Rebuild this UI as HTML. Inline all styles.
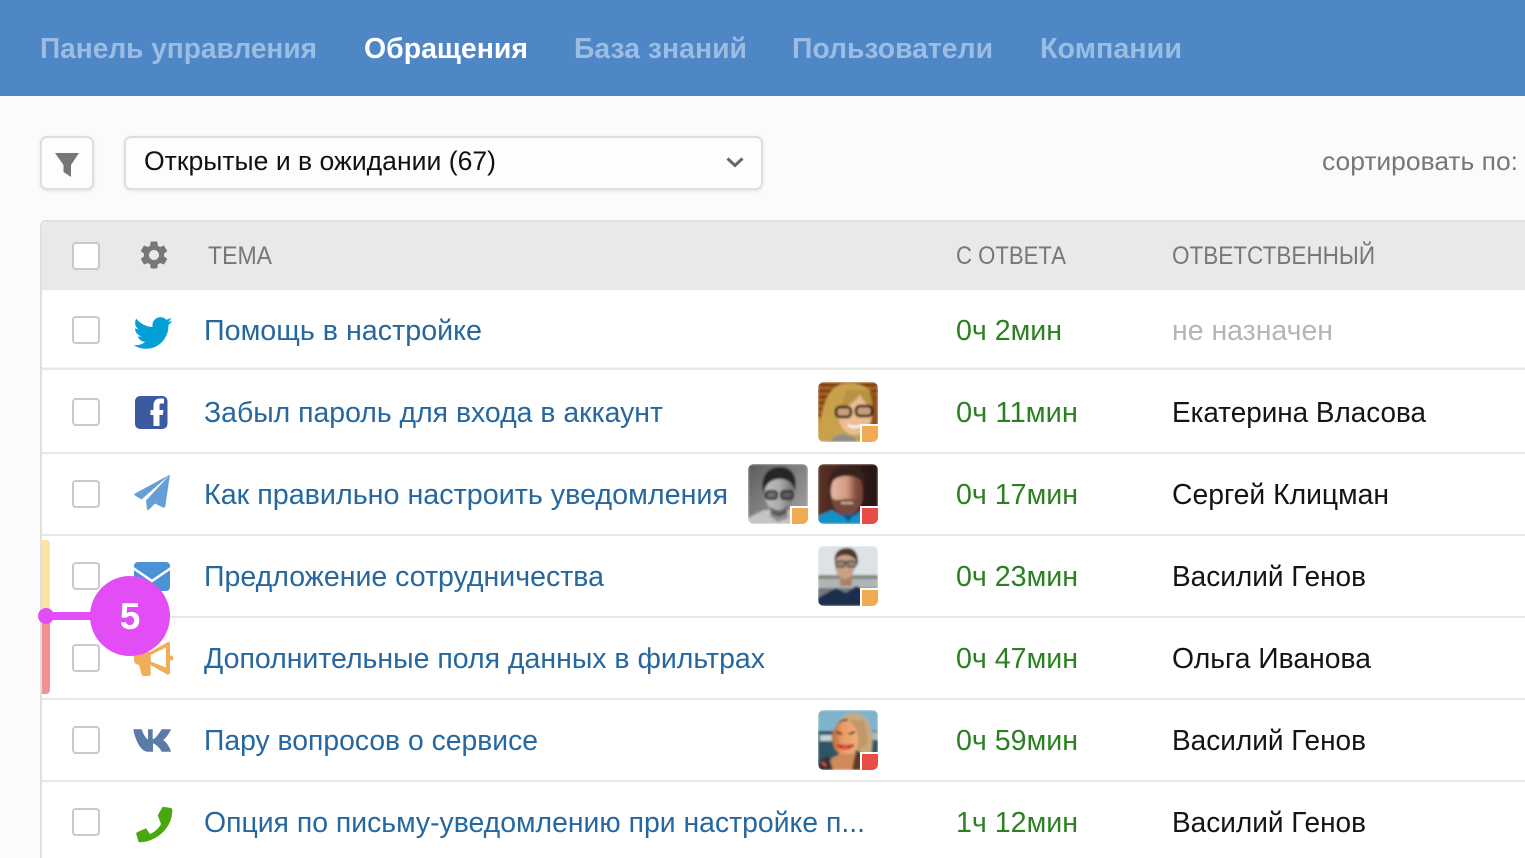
<!DOCTYPE html>
<html lang="ru"><head><meta charset="utf-8"><title>Обращения</title>
<style>
html,body{margin:0;padding:0;width:1525px;height:858px;overflow:hidden;background:#fbfbfb}
svg{display:block}
text{font-family:"Liberation Sans","DejaVu Sans",sans-serif}
.nav{font-size:29px;font-weight:700;fill:#9bbde3}
.hd{font-size:25px;fill:#777}
.l{font-size:29px;fill:#26679f}
.t{font-size:29px;fill:#2b8021}
.n{font-size:29px;fill:#141414}
.cb{fill:#fff;stroke:#c9c9c9;stroke-width:2}
.sep{fill:#e7e7e7}
</style></head><body>
<svg width="1525" height="858" viewBox="0 0 1525 858" xmlns="http://www.w3.org/2000/svg">
<defs>
<filter id="b" x="-10%" y="-10%" width="120%" height="120%"><feGaussianBlur stdDeviation="1.1"/></filter>
<filter id="s" x="-10%" y="-20%" width="120%" height="140%"><feDropShadow dx="0" dy="1" stdDeviation="1.5" flood-color="#000" flood-opacity=".1"/></filter>
<clipPath id="av"><rect width="60" height="60" rx="6"/></clipPath>
<linearGradient id="g2" x1="0" y1="0" x2="1" y2="1"><stop offset="0" stop-color="#5c5c5c"/><stop offset="1" stop-color="#a8a8a8"/></linearGradient>
<linearGradient id="f2" x1="0" x2="1"><stop offset="0" stop-color="#c0c0c0"/><stop offset=".55" stop-color="#aaa"/><stop offset="1" stop-color="#6e6e6e"/></linearGradient>
<linearGradient id="f3" x1="0" x2="1"><stop offset="0" stop-color="#e6b8a4"/><stop offset=".5" stop-color="#d09a80"/><stop offset=".75" stop-color="#8a5442"/><stop offset="1" stop-color="#6a3c30"/></linearGradient>
<linearGradient id="b3" x1="0" x2="1"><stop offset="0" stop-color="#5a3226"/><stop offset="1" stop-color="#241110"/></linearGradient>
<linearGradient id="f5" x1="0" x2="1"><stop offset="0" stop-color="#b86a3c"/><stop offset=".4" stop-color="#e89c62"/><stop offset="1" stop-color="#eeb07c"/></linearGradient>
</defs>
<rect width="1525" height="858" fill="#fbfbfb"/>
<rect width="1525" height="96" fill="#4f86c6"/>
<text class="nav" x="40" y="58" textLength="277" lengthAdjust="spacingAndGlyphs">Панель управления</text>
<text class="nav" x="364" y="58" textLength="164" lengthAdjust="spacingAndGlyphs" style="fill:#fff">Обращения</text>
<text class="nav" x="574" y="58" textLength="173" lengthAdjust="spacingAndGlyphs">База знаний</text>
<text class="nav" x="792" y="58" textLength="201" lengthAdjust="spacingAndGlyphs">Пользователи</text>
<text class="nav" x="1040" y="58" textLength="142" lengthAdjust="spacingAndGlyphs">Компании</text>

<rect x="41" y="137" width="52" height="52" rx="6" fill="#fdfdfd" stroke="#dedede" stroke-width="2" filter="url(#s)"/>
<path d="M55 153H79L71 165V177L63.500 172V165Z" fill="#777"/>
<rect x="125" y="137" width="637" height="52" rx="6" fill="#fdfdfd" stroke="#dedede" stroke-width="2" filter="url(#s)"/>
<text x="144" y="170" font-size="27" fill="#111" textLength="352" lengthAdjust="spacingAndGlyphs">Открытые и в ожидании (67)</text>
<path d="M727.500 158.500L735 165.500L742.500 158.500" fill="none" stroke="#666" stroke-width="3"/>
<text x="1322" y="170" font-size="26" fill="#777" textLength="196" lengthAdjust="spacingAndGlyphs">сортировать по:</text>

<path d="M1525 220H46a6 6 0 0 0-6 6V858H1525Z" fill="#fff"/>
<path d="M1525 222H48a6 6 0 0 0-6 6V290H1525Z" fill="#e8e9eb"/>
<path d="M1525 221H46a5 5 0 0 0-5 5V858" fill="none" stroke="#dfdfdf" stroke-width="2"/>

<rect class="sep" x="42" y="367.500" width="1483" height="2.500"/>
<rect class="sep" x="42" y="452" width="1483" height="2"/>
<rect class="sep" x="42" y="534" width="1483" height="2"/>
<rect class="sep" x="42" y="616" width="1483" height="2"/>
<rect class="sep" x="42" y="698" width="1483" height="2"/>
<rect class="sep" x="42" y="780" width="1483" height="2"/>

<rect class="cb" x="73" y="243" width="26" height="26" rx="3"/>
<rect class="cb" x="73" y="317" width="26" height="26" rx="3"/>
<rect class="cb" x="73" y="399" width="26" height="26" rx="3"/>
<rect class="cb" x="73" y="481" width="26" height="26" rx="3"/>
<rect class="cb" x="73" y="563" width="26" height="26" rx="3"/>
<rect class="cb" x="73" y="645" width="26" height="26" rx="3"/>
<rect class="cb" x="73" y="727" width="26" height="26" rx="3"/>
<rect class="cb" x="73" y="809" width="26" height="26" rx="3"/>

<g transform="translate(137.200,238.200) scale(1.4)"><path fill="#777" fill-rule="evenodd" d="M19.14 12.94c.04-.3.06-.61.06-.94 0-.32-.02-.64-.07-.94l2.03-1.58a.49.49 0 00.12-.61l-1.92-3.32a.488.488 0 00-.59-.22l-2.39.96c-.5-.38-1.03-.7-1.62-.94l-.36-2.54a.484.484 0 00-.48-.41h-3.84c-.24 0-.43.17-.47.41l-.36 2.54c-.59.24-1.13.57-1.62.94l-2.39-.96c-.22-.08-.47 0-.59.22L2.74 8.87c-.12.21-.08.47.12.61l2.03 1.58c-.05.3-.09.63-.09.94s.02.64.07.94l-2.03 1.58a.49.49 0 00-.12.61l1.92 3.32c.12.22.37.29.59.22l2.39-.96c.5.38 1.03.7 1.62.94l.36 2.54c.05.24.24.41.48.41h3.84c.24 0 .44-.17.47-.41l.36-2.54c.59-.24 1.13-.56 1.62-.94l2.39.96c.22.08.47 0 .59-.22l1.92-3.32c.12-.22.07-.47-.12-.61l-2.01-1.58zM12 15.6c-1.98 0-3.6-1.62-3.6-3.6s1.62-3.6 3.6-3.6 3.6 1.62 3.6 3.6-1.62 3.6-3.6 3.6z"/></g>

<text class="hd" x="208" y="264" textLength="64" lengthAdjust="spacingAndGlyphs">ТЕМА</text>
<text class="hd" x="956" y="264" textLength="110" lengthAdjust="spacingAndGlyphs">С ОТВЕТА</text>
<text class="hd" x="1172" y="264" textLength="203" lengthAdjust="spacingAndGlyphs">ОТВЕТСТВЕННЫЙ</text>

<text class="l" x="204" y="340" textLength="278" lengthAdjust="spacingAndGlyphs">Помощь в настройке</text>
<text class="l" x="204" y="422" textLength="459" lengthAdjust="spacingAndGlyphs">Забыл пароль для входа в аккаунт</text>
<text class="l" x="204" y="504" textLength="524" lengthAdjust="spacingAndGlyphs">Как правильно настроить уведомления</text>
<text class="l" x="204" y="586" textLength="400" lengthAdjust="spacingAndGlyphs">Предложение сотрудничества</text>
<text class="l" x="204" y="668" textLength="561" lengthAdjust="spacingAndGlyphs">Дополнительные поля данных в фильтрах</text>
<text class="l" x="204" y="750" textLength="334" lengthAdjust="spacingAndGlyphs">Пару вопросов о сервисе</text>
<text class="l" x="204" y="832" textLength="661" lengthAdjust="spacingAndGlyphs">Опция по письму-уведомлению при настройке п...</text>

<text class="t" x="956" y="340" textLength="106" lengthAdjust="spacingAndGlyphs">0ч 2мин</text>
<text class="t" x="956" y="422" textLength="122" lengthAdjust="spacingAndGlyphs">0ч 11мин</text>
<text class="t" x="956" y="504" textLength="122" lengthAdjust="spacingAndGlyphs">0ч 17мин</text>
<text class="t" x="956" y="586" textLength="122" lengthAdjust="spacingAndGlyphs">0ч 23мин</text>
<text class="t" x="956" y="668" textLength="122" lengthAdjust="spacingAndGlyphs">0ч 47мин</text>
<text class="t" x="956" y="750" textLength="122" lengthAdjust="spacingAndGlyphs">0ч 59мин</text>
<text class="t" x="956" y="832" textLength="122" lengthAdjust="spacingAndGlyphs">1ч 12мин</text>

<text class="n" x="1172" y="340" textLength="161" lengthAdjust="spacingAndGlyphs" style="fill:#b5b5b5">не назначен</text>
<text class="n" x="1172" y="422" textLength="254" lengthAdjust="spacingAndGlyphs">Екатерина Власова</text>
<text class="n" x="1172" y="504" textLength="217" lengthAdjust="spacingAndGlyphs">Сергей Клицман</text>
<text class="n" x="1172" y="586" textLength="194" lengthAdjust="spacingAndGlyphs">Василий Генов</text>
<text class="n" x="1172" y="668" textLength="199" lengthAdjust="spacingAndGlyphs">Ольга Иванова</text>
<text class="n" x="1172" y="750" textLength="194" lengthAdjust="spacingAndGlyphs">Василий Генов</text>
<text class="n" x="1172" y="832" textLength="194" lengthAdjust="spacingAndGlyphs">Василий Генов</text>

<!-- twitter -->
<g transform="translate(133.500,313.500) scale(1.62)"><path fill="#049fd6" d="M23.95 4.57a10 10 0 01-2.82.78 4.96 4.96 0 002.16-2.72c-.95.55-2 .96-3.12 1.19a4.92 4.92 0 00-8.38 4.48C7.69 8.1 4.07 6.13 1.64 3.16a4.82 4.82 0 00-.66 2.47c0 1.71.87 3.21 2.19 4.1a4.9 4.9 0 01-2.23-.61v.06c0 2.39 1.7 4.38 3.95 4.83-.41.11-.85.17-1.3.17-.31 0-.61-.03-.92-.08.63 1.96 2.45 3.39 4.6 3.43A9.87 9.87 0 010 19.54a14 14 0 007.56 2.21c9.05 0 14-7.5 14-13.98 0-.21 0-.42-.02-.63a9.94 9.94 0 002.46-2.55l-.05-.02z"/></g>
<!-- facebook -->
<rect x="135" y="396" width="32.500" height="33" rx="5" fill="#3b5a9f"/>
<path d="M153.500 426V415H150.500V410H153.500V405.500C153.500 400.500 156.500 398.500 160 398.500H164V403.500H161.500C160 403.500 159.500 404.200 159.500 405.500V410H163.500L162.800 415H159.500V426Z" fill="#fff"/>
<!-- plane -->
<path d="M170 474.500L135 493.500Q133.500 494.500 135 495.500L141.500 499.500ZM170 474.500L146 500.500L147 509Q147.500 511 149 509.500L155 503.500L163 507.500Q165 508 165.300 506Z" fill="#659fd6"/>
<!-- mail -->
<path d="M138 562H166a4 4 0 0 1 4 4V587a4 4 0 0 1-4 4H138a4 4 0 0 1-4-4V566a4 4 0 0 1 4-4Z" fill="#4b93d6"/>
<path d="M133 568L152 581L171 568" fill="none" stroke="#fff" stroke-width="2.500"/>
<!-- megaphone -->
<path fill="#f0ae5a" fill-rule="evenodd" d="M170 642.500V673.500L168 675L150.500 665L150.700 674Q150.700 676 148.700 676H144Q142 676 141.500 674L139 665Q134 664 134 660V656Q134 652 138 652H150L168 642ZM166 647.500L150.700 655V661.500L166 667.500Z"/>
<circle cx="171" cy="658" r="2.500" fill="#f0ae5a"/>
<!-- vk -->
<path fill="#5a7ba5" d="M133.300 729.300H141.700C143 733.500 145.300 738 148 739.500V729.300H152.700V739.500C155.800 738.500 159 733.500 161.700 729.300H171C169.500 733 166.500 737.500 163.300 740C166.500 742.500 169.500 746.500 171 751.700H161.700C159.500 747.500 156 744.500 153 743.300V751.700H146.700C140 750.500 135 739 133.300 729.300Z"/>
<!-- phone -->
<path fill="#4aa80f" d="M162.700 806.700L171 808Q172.300 808.500 172.300 810C172.800 828 156 842 140 842.300Q138.500 842.300 138.300 841L136.300 834Q136 832.800 137 832.300L146 828.300L150 834C155 832 159 828 161 824L158 816Q157.700 815 158.200 814.500Z"/>

<!-- avatar 1 -->
<g transform="translate(818,382)"><g clip-path="url(#av)"><g filter="url(#b)">
<rect width="60" height="60" fill="#a85f20"/>
<path d="M0 3H60M0 9H60M0 15H60M0 21H60M0 27H60M0 33H60" stroke="#5e2f10" stroke-width="2"/>
<rect y="36" width="60" height="24" fill="#c5852f"/>
<path d="M0 60C2 36 6 6 24 2C40 0 52 4 56 16L52 60Z" fill="#c8a24c"/>
<path d="M52 10L60 14V60H50Z" fill="#90501c"/>
<ellipse cx="37" cy="32" rx="17" ry="21" fill="#ecbc94"/>
<path d="M17 28C24 22 27 14 28 8L50 8C54 14 54 22 54 26C48 22 44 18 42 12C38 20 28 24 17 34Z" fill="#b8923f"/>
<path d="M12 60C14 54 22 52 26 52L38 56V60Z" fill="#8e8e86"/>
<rect x="18" y="25" width="15" height="10" rx="4" fill="#c99c7a" stroke="#17120f" stroke-width="2.600"/>
<rect x="38" y="24" width="16" height="10" rx="4" fill="#c99c7a" stroke="#17120f" stroke-width="2.600"/>
<path d="M30 43Q37 47 43 43" stroke="#fff" stroke-width="2.200" fill="none"/>
</g>
<rect x="42" y="42" width="18" height="18" fill="#fff"/><rect x="44" y="44" width="16" height="16" fill="#f2ab52"/></g></g>

<!-- avatar 2 -->
<g transform="translate(748,464)"><g clip-path="url(#av)"><g filter="url(#b)">
<rect width="60" height="60" fill="url(#g2)"/>
<path d="M0 60V54L16 46H44L56 60Z" fill="#c4c4c4"/>
<path d="M22 44H40V54L30 58L22 52Z" fill="#8e8e8e"/>
<ellipse cx="31" cy="29" rx="14" ry="20" fill="url(#f2)"/>
<path d="M15 28C12 10 22 3 32 3C44 3 50 12 47 28C45 20 42 16 34 15C26 14 18 18 16 28Z" fill="#262626"/>
<path d="M22 42C26 48 36 48 40 41L38 50L31 53L24 50Z" fill="#5c5c5c"/>
<rect x="18" y="27" width="11" height="8" rx="3" fill="#6d6d6d" stroke="#1e1e1e" stroke-width="2"/>
<rect x="33" y="27" width="12" height="8" rx="3" fill="#5c5c5c" stroke="#1e1e1e" stroke-width="2"/>
</g>
<rect x="42" y="42" width="18" height="18" fill="#fff"/><rect x="44" y="44" width="16" height="16" fill="#f2ab52"/></g></g>

<!-- avatar 3 -->
<g transform="translate(818,464)"><g clip-path="url(#av)"><g filter="url(#b)">
<rect width="60" height="60" fill="url(#b3)"/>
<ellipse cx="29" cy="27" rx="16" ry="21" fill="url(#f3)"/>
<path d="M11 24C8 8 20 2 30 2C42 2 49 10 47 24C45 15 38 12 29 12C20 12 14 15 11 24Z" fill="#38201a"/>
<path d="M13 33C17 38 22 35 29 35C36 35 40 37 45 30C45 43 37 52 29 52C21 52 14 45 13 33Z" fill="#74483a"/>
<path d="M23 39H35" stroke="#d8b0a0" stroke-width="2"/>
<path d="M0 60V52L14 46L24 52H36L46 44L60 50V60Z" fill="#1690c8"/>
<path d="M24 50L30 58L37 50Z" fill="#0b5c84"/>
</g>
<rect x="42" y="42" width="18" height="18" fill="#fff"/><rect x="44" y="44" width="16" height="16" fill="#e94c45"/></g></g>

<!-- avatar 4 -->
<g transform="translate(818,546)"><g clip-path="url(#av)"><g filter="url(#b)">
<rect width="60" height="60" fill="#dde2e5"/>
<rect y="29" width="60" height="4" fill="#85877f"/>
<rect y="33" width="60" height="9" fill="#b0b6b8"/>
<rect y="42" width="60" height="18" fill="#72777a"/>
<rect x="22" y="28" width="12" height="12" fill="#a98068"/>
<ellipse cx="27" cy="19" rx="10" ry="14" fill="#c9a086"/>
<path d="M17 17C15 6 22 2 29 2C37 2 41 8 40 20C38 12 33 9 27 9C22 9 18 11 17 17Z" fill="#4e3826"/>
<path d="M17 16H38" stroke="#3d3d3d" stroke-width="1.500"/>
<rect x="18" y="15" width="9" height="6" rx="2" fill="#958576" stroke="#333" stroke-width="1.200"/>
<rect x="29" y="15" width="9" height="6" rx="2" fill="#958576" stroke="#333" stroke-width="1.200"/>
<path d="M0 60V52L18 42L28 47L38 40L52 46L56 60Z" fill="#1d2d4d"/>
</g>
<rect x="42" y="42" width="18" height="18" fill="#fff"/><rect x="44" y="44" width="16" height="16" fill="#f2ab52"/></g></g>

<!-- avatar 5 -->
<g transform="translate(818,710)"><g clip-path="url(#av)"><g filter="url(#b)">
<rect width="60" height="60" fill="#7fb3cc"/>
<rect y="21" width="60" height="39" fill="#2f5566"/>
<rect x="2" y="25" width="12" height="6" fill="#c8d2d0"/>
<rect x="50" y="22" width="10" height="8" fill="#a8b8b8"/>
<path d="M16 32C16 14 24 3 36 3C50 4 56 20 54 38C53 50 48 60 42 60H28Z" fill="#cba97c"/>
<path d="M16 24C17 12 24 8 30 9L18 30Z" fill="#54402e"/>
<ellipse cx="27" cy="28" rx="13" ry="17" fill="url(#f5)"/>
<path d="M30 10C38 14 42 26 40 42L50 32L46 10Z" fill="#bf976a"/>
<path d="M19 35Q27 42 36 35Q27 37 19 35Z" fill="#e8e0d8" stroke="#c82c2c" stroke-width="2"/>
<path d="M18 22L24 24M31 24L37 22" stroke="#5a2c18" stroke-width="2"/>
<path d="M8 60L14 48L22 44H36L42 60Z" fill="#cf8a5c"/>
<path d="M0 60L2 50L10 45L15 60Z" fill="#3e2d32"/>
<path d="M4 52L8 56" stroke="#d06050" stroke-width="2"/>
<path d="M38 40C48 44 50 52 48 60H34Z" fill="#5c3c28"/>
</g>
<rect x="42" y="42" width="18" height="18" fill="#fff"/><rect x="44" y="44" width="16" height="16" fill="#e94c45"/></g></g>

<!-- priority bars -->
<path d="M42 540H46a4 4 0 0 1 4 4V616H42Z" fill="#fde3a6"/>
<path d="M42 616H50V690a4 4 0 0 1-4 4H42Z" fill="#f49092"/>
<!-- callout -->
<rect x="46" y="612" width="60" height="8" fill="#e24df5"/>
<circle cx="46" cy="616" r="8" fill="#e24df5"/>
<circle cx="130" cy="616" r="40" fill="#e24df5"/>
<text x="130" y="629" font-size="37" font-weight="700" fill="#fff" text-anchor="middle">5</text>
</svg>
</body></html>
